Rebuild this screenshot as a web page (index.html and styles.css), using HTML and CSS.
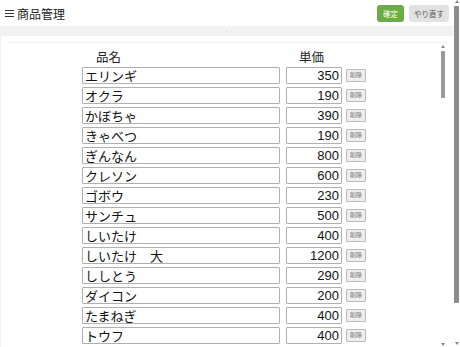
FILE: index.html
```html
<!DOCTYPE html>
<html lang="ja">
<head>
    <meta charset="UTF-8">
    <meta name="viewport" content="width=device-width, initial-scale=1.0">
    <title>商品管理</title>
    <link rel="stylesheet" href="styles.css">
</head>
<body>
    <div class="page">
        <div class="header">
            <div class="title">
                <svg class="menu" width="9" height="9" viewBox="0 0 9 9"><path d="M0 1.5h9M0 4.5h9M0 7.5h9" stroke="#333" stroke-width="1.1"/></svg>
                商品管理
            </div>
            <div class="actions">
                <button type="button" class="btn-ok">確定</button>
                <button type="button" class="btn-reset">やり直す</button>
            </div>
        </div>
        <div class="band"><span class="grip"></span></div>
        <div class="panel">
            <div class="scroll-area">
                <div class="list">
                    <div class="list-head">
                        <span class="head-name">品名</span>
                        <span class="head-price">単価</span>
                    </div>
                    <div class="item"><input class="name" type="text" value="エリンギ"><input class="price" type="text" value="350"><button type="button" class="del">削除</button></div>
                    <div class="item"><input class="name" type="text" value="オクラ"><input class="price" type="text" value="190"><button type="button" class="del">削除</button></div>
                    <div class="item"><input class="name" type="text" value="かぼちゃ"><input class="price" type="text" value="390"><button type="button" class="del">削除</button></div>
                    <div class="item"><input class="name" type="text" value="きゃべつ"><input class="price" type="text" value="190"><button type="button" class="del">削除</button></div>
                    <div class="item"><input class="name" type="text" value="ぎんなん"><input class="price" type="text" value="800"><button type="button" class="del">削除</button></div>
                    <div class="item"><input class="name" type="text" value="クレソン"><input class="price" type="text" value="600"><button type="button" class="del">削除</button></div>
                    <div class="item"><input class="name" type="text" value="ゴボウ"><input class="price" type="text" value="230"><button type="button" class="del">削除</button></div>
                    <div class="item"><input class="name" type="text" value="サンチュ"><input class="price" type="text" value="500"><button type="button" class="del">削除</button></div>
                    <div class="item"><input class="name" type="text" value="しいたけ"><input class="price" type="text" value="400"><button type="button" class="del">削除</button></div>
                    <div class="item"><input class="name" type="text" value="しいたけ　大"><input class="price" type="text" value="1200"><button type="button" class="del">削除</button></div>
                    <div class="item"><input class="name" type="text" value="ししとう"><input class="price" type="text" value="290"><button type="button" class="del">削除</button></div>
                    <div class="item"><input class="name" type="text" value="ダイコン"><input class="price" type="text" value="200"><button type="button" class="del">削除</button></div>
                    <div class="item"><input class="name" type="text" value="たまねぎ"><input class="price" type="text" value="400"><button type="button" class="del">削除</button></div>
                    <div class="item"><input class="name" type="text" value="トウフ"><input class="price" type="text" value="400"><button type="button" class="del">削除</button></div>
                </div>
                <div class="bar inner-bar">
                    <span class="arrow-up"></span>
                    <span class="thumb inner-thumb"></span>
                    <span class="track"></span>
                    <span class="arrow-down"></span>
                </div>
            </div>
        </div>
    </div>
    <div class="bar outer-bar">
        <span class="arrow-up"></span>
        <span class="thumb outer-thumb"></span>
        <span class="track"></span>
        <span class="arrow-down"></span>
    </div>
</body>
</html>
```

FILE: styles.css
```css
html, body {
    margin: 0;
    height: 347px;
    overflow: hidden;
}
body {
    display: flex;
    font-family: "Liberation Sans", "Noto Sans CJK JP", sans-serif;
    color: #222;
    background: #fff;
}
.page {
    flex: 1;
    display: flex;
    flex-direction: column;
    min-width: 0;
    background: #f2f2f2;
}
.header {
    flex-shrink: 0;
    height: 26px;
    display: flex;
    align-items: center;
    justify-content: space-between;
    padding: 0 4px 0 5px;
    background: #fff;
}
.title {
    font-family: "Noto Sans CJK JP", sans-serif;
    font-size: 12px;
    display: flex;
    align-items: center;
}
.menu {
    margin-right: 3px;
}
.actions {
    display: flex;
    gap: 5px;
}
.actions button {
    height: 17px;
    border: none;
    border-radius: 3px;
    padding: 0;
    font-family: "Noto Sans CJK JP", sans-serif;
    font-size: 7.5px;
    cursor: pointer;
}
.btn-ok {
    width: 27px;
    background: #6cac45;
    color: #fff;
}
.btn-reset {
    width: 40px;
    background: #e2e2e2;
    color: #555;
}
.band {
    flex-shrink: 0;
    height: 10px;
    display: flex;
    justify-content: center;
    align-items: center;
}
.grip {
    width: 1px;
    height: 1px;
    background: #ccc;
}
.panel {
    flex: 1;
    min-height: 0;
    overflow: hidden;
    margin-left: 1px;
    background: #fff;
    padding: 6px 6px 0 6px;
}
.scroll-area {
    display: flex;
    height: 100%;
    border-top: 1px solid #f0f0f0;
}
.list {
    flex: 1;
    padding-left: 75px;
}
.list-head {
    display: flex;
    height: 22px;
    box-sizing: border-box;
    padding-top: 5px;
    align-items: center;
    font-family: "Noto Sans CJK JP", sans-serif;
    font-size: 12.5px;
}
.head-name {
    width: 204px;
    padding-left: 14px;
    box-sizing: border-box;
}
.head-price {
    padding-left: 13px;
}
.item {
    display: flex;
    align-items: center;
    height: 20px;
}
.item input {
    height: 17px;
    box-sizing: border-box;
    border: 1px solid #b0b0b0;
    border-radius: 1px;
    padding: 0 2px;
    font-family: "Liberation Sans", "Noto Sans CJK JP", sans-serif;
    font-size: 13px;
    color: #111;
    background: #fff;
}
.name {
    width: 198px;
    margin-right: 6px;
}
.price {
    width: 56px;
    text-align: right;
    margin-right: 4px;
}
.del {
    width: 20px;
    height: 13px;
    padding: 0;
    border: 1px solid #bbb;
    border-radius: 1px;
    background: #eee;
    color: #777;
    font-family: "Noto Sans CJK JP", sans-serif;
    font-size: 6px;
    line-height: 1;
}
.bar {
    display: flex;
    flex-direction: column;
    align-items: center;
}
.inner-bar {
    width: 6px;
    margin-right: 1px;
    padding-top: 2px;
}
.outer-bar {
    width: 7px;
    background: #fff;
}
.arrow-up, .arrow-down {
    width: 0;
    height: 0;
    border-left: 2px solid transparent;
    border-right: 2px solid transparent;
}
.arrow-up {
    border-bottom: 3px solid #888;
    margin-bottom: 3px;
}
.arrow-down {
    border-top: 3px solid #888;
    margin-bottom: 2px;
}
.thumb {
    width: 4px;
    border-radius: 1px;
    background: #999;
}
.inner-thumb {
    height: 47px;
}
.outer-thumb {
    height: 297px;
    width: 5px;
    background: #8c8c8c;
}
.track {
    flex: 1;
}
```
